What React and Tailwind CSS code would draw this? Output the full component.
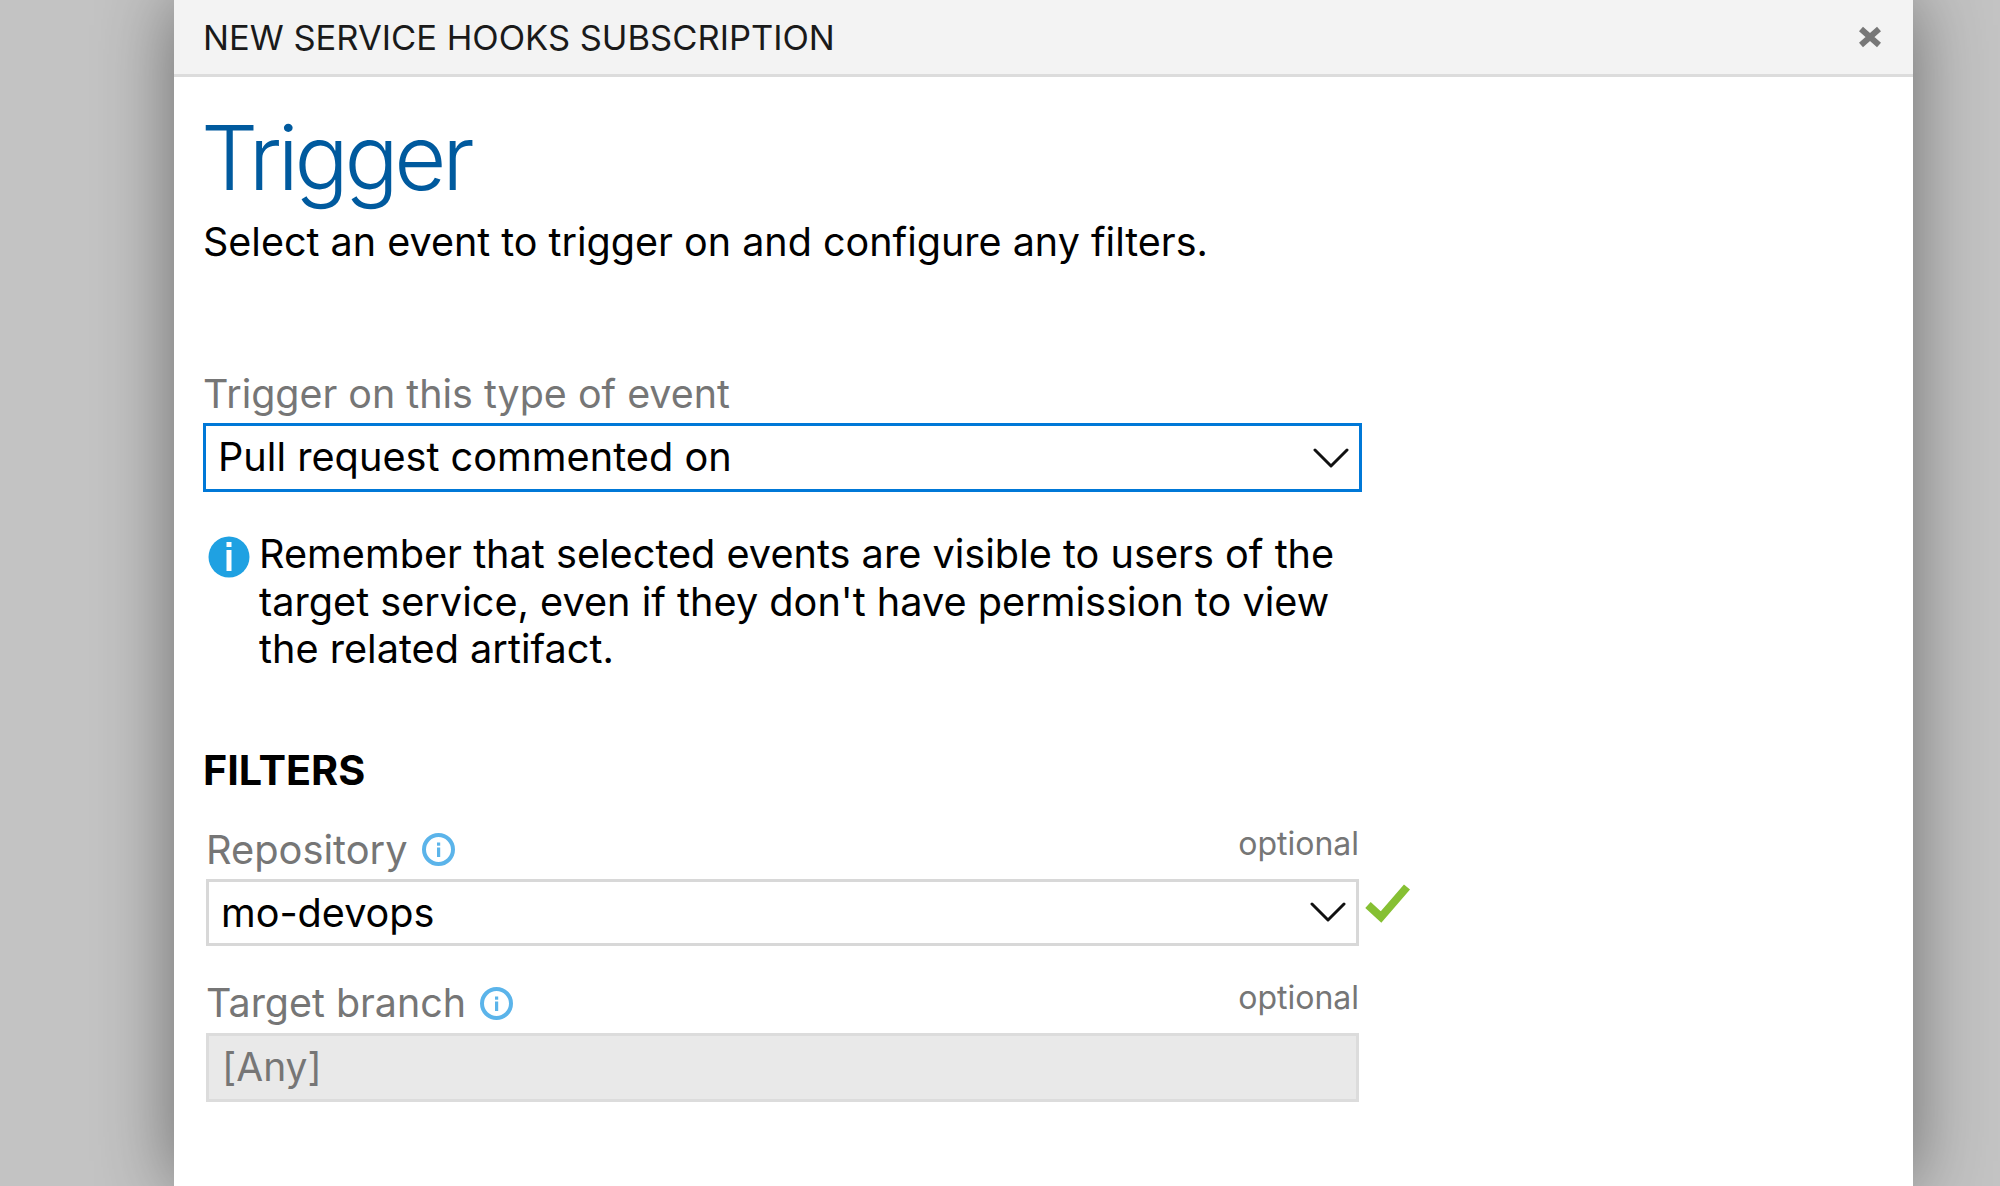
import { useState } from 'react';

function Chevron() {
  return (
    <svg width="36" height="22" viewBox="0 0 36 22" fill="none" className="shrink-0">
      <path d="M2 3 L18 19 L34 3" stroke="#111" strokeWidth="3" strokeLinecap="round" strokeLinejoin="round" />
    </svg>
  );
}

function SmallInfo() {
  return (
    <svg width="33" height="33" viewBox="0 0 33 33" fill="none" className="shrink-0">
      <circle cx="16.5" cy="16.5" r="14.5" stroke="#5bb4ea" strokeWidth="4" />
      <rect x="15" y="14.5" width="3.2" height="9.5" fill="#5bb4ea" />
      <rect x="15" y="9.5" width="3.2" height="3.2" fill="#5bb4ea" />
    </svg>
  );
}

function FieldLabel({ label, size }) {
  return (
    <div className="flex justify-between items-start h-[53px]">
      <div className={`flex items-center gap-[14px] leading-[49px] text-[#767676] ${size}`}>
        {label}
        <SmallInfo />
      </div>
      <span className="mt-[2px] text-[32px] leading-[34px] text-[#767676]">optional</span>
    </div>
  );
}

export default function App() {
  const [event] = useState('Pull request commented on');

  return (
    <div className="w-[2000px] h-[1186px] overflow-hidden bg-[#c3c3c3] font-['Inter',sans-serif] text-black">
      <div className="ml-[174px] w-[1739px] h-[1186px] bg-white shadow-[0_0_70px_rgba(0,0,0,0.45)]">
        {/* Title bar */}
        <div className="flex items-center justify-between h-[77px] pl-[29px] pr-[30px] bg-[#f3f3f3] border-b-[3px] border-[#dcdcdc]">
          <span className="mt-[2px] text-[34.5px] text-[#1a1a1a]">NEW SERVICE HOOKS SUBSCRIPTION</span>
          <svg width="26" height="26" viewBox="0 0 26 26" className="shrink-0">
            <path d="M4 5 L22 21 M22 5 L4 21" stroke="#777" strokeWidth="6" />
          </svg>
        </div>

        <div className="pl-[29px] w-[1190px]">
          <h1 className="mt-[26px] -ml-[2px] text-[90px] leading-[110px] tracking-[-4.3px] font-light text-[#005a9e]">Trigger</h1>
          <p className="mt-[4px] text-[39.5px] leading-[50px]">Select an event to trigger on and configure any filters.</p>

          <div className="mt-[102px] text-[39.4px] leading-[50px] text-[#767676]">Trigger on this type of event</div>
          <div className="mt-[4px] w-[1159px] h-[69px] flex items-center justify-between pl-[12px] pr-[10px] border-[3px] border-[#0078d7]">
            <span className="text-[39.7px]">{event}</span>
            <Chevron />
          </div>

          <div className="mt-[39px] flex w-[1159px]">
            <svg width="42" height="42" viewBox="0 0 42 42" className="ml-[5px] mt-[5px] shrink-0">
              <circle cx="21" cy="21" r="20.5" fill="#1fa1e2" />
              <rect x="18.5" y="6" width="5" height="5" fill="#fff" />
              <rect x="18.5" y="14" width="5" height="21" fill="#fff" />
            </svg>
            <p className="ml-[9px] text-[39.66px] leading-[47.6px]">
              Remember that selected events are visible to users of the target service, even if they don't have permission to view the related artifact.
            </p>
          </div>

          <h2 className="mt-[71px] text-[41.3px] leading-[50px] font-bold">FILTERS</h2>

          <div className="mt-[30px] ml-[3px] w-[1153px]">
            <FieldLabel label="Repository" size="text-[39.8px]" />
            <div className="mt-[1px] relative h-[67px] flex items-center justify-between pl-[12px] pr-[10px] border-[3px] border-[#d8d8d8]">
              <span className="mt-[2px] text-[39.6px]">mo-devops</span>
              <Chevron />
              <svg width="48" height="41" viewBox="0 0 48 41" className="absolute left-[1155px] top-[0px]">
                <path d="M4 23 L17 35 L43 5" fill="none" stroke="#86c033" strokeWidth="8" strokeLinejoin="miter" />
              </svg>
            </div>

            <div className="mt-[33px]">
              <FieldLabel label="Target branch" size="text-[39.4px]" />
            </div>
            <div className="mt-[1px] h-[69px] flex items-center pl-[13px] bg-[#e9e9e9] border-[3px] border-[#dcdcdc] text-[39px] text-[#767676]">
              [Any]
            </div>
          </div>
        </div>
      </div>
    </div>
  );
}
